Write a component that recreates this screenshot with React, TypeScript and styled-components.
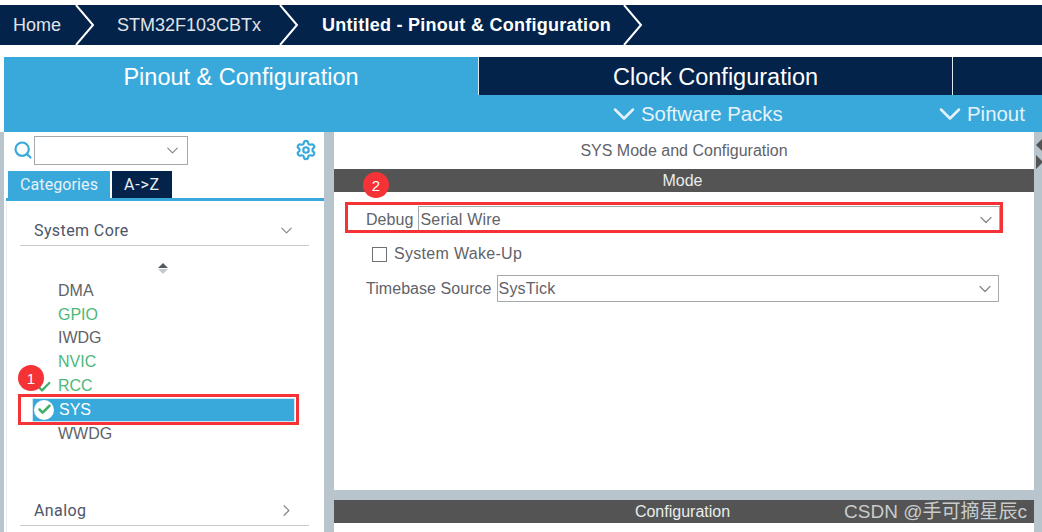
import React from "react";
import styled, { createGlobalStyle } from "styled-components";
import { ChevronDown, ChevronRight, Search, Settings, Check } from "lucide-react";

const navy = "#03234b";
const blue = "#39a9dc";
const greyBar = "#535453";
const gutter = "#b9c5cc";
const textGrey = "#5f6369";
const green = "#4cb878";
const red = "#f53236";

const GlobalStyle = createGlobalStyle`
  html, body {
    margin: 0;
    padding: 0;
    background: #fff;
    font-family: "Liberation Sans", Arial, sans-serif;
  }
`;

const peripherals = [
  { name: "DMA", active: false },
  { name: "GPIO", active: true },
  { name: "IWDG", active: false },
  { name: "NVIC", active: true },
];

const BreadcrumbArrow = () => (
  <ArrowSvg viewBox="0 0 20 40" aria-hidden="true">
    <path d="M1 0 L18 20 L1 40" fill="none" stroke="#fff" strokeWidth="2" />
  </ArrowSvg>
);

const App: React.FC = () => {
  return (
    <Page>
      <GlobalStyle />
      <Breadcrumb>
        <Crumb $pad="0 14px 0 13px">Home</Crumb>
        <BreadcrumbArrow />
        <Crumb $pad="0 18px 0 22px">STM32F103CBTx</Crumb>
        <BreadcrumbArrow />
        <Crumb $pad="0 12px 0 23px" $bold>Untitled - Pinout &amp; Configuration</Crumb>
        <BreadcrumbArrow />
      </Breadcrumb>

      <MainTabs>
        <MainTab $active $width={475}>Pinout &amp; Configuration</MainTab>
        <MainTab $width={474}>Clock Configuration</MainTab>
        <MainTab $width={89} />
      </MainTabs>
      <SubBar>
        <SubItem $width={178}>
          <ChevronDown size={36} strokeWidth={1.7} />
          Software Packs
        </SubItem>
        <SubItem $width={92}>
          <ChevronDown size={36} strokeWidth={1.7} />
          Pinout
        </SubItem>
      </SubBar>

      <Body>
        <Sidebar>
          <SearchRow>
            <Search size={20} color={blue} strokeWidth={2.6} />
            <SearchSelect>
              <ChevronDown size={19} color="#85898d" strokeWidth={1.5} />
            </SearchSelect>
            <GearSlot>
              <Settings size={22} color={blue} strokeWidth={2.4} />
            </GearSlot>
          </SearchRow>
          <SideTabs>
            <SideTab $active $width={102}>Categories</SideTab>
            <SideTab $width={60}>A-&gt;Z</SideTab>
          </SideTabs>
          <SideContent>
            <SectionHead $top={17}>
              System Core
              <ChevronDown size={19} color="#85898d" strokeWidth={1.5} />
            </SectionHead>
            <SortArrows>
              <SortUp />
              <SortDown />
            </SortArrows>
            <PeripheralList>
              {peripherals.map((p) => (
                <Peripheral key={p.name} $active={p.active}>{p.name}</Peripheral>
              ))}
              <Peripheral $active>
                <RccCheck size={16} color="#3fae68" strokeWidth={3.4} />
                RCC
                <Badge $left={-40} $top={-9}>1</Badge>
              </Peripheral>
              <SelectedRow>
                <CheckDisc>
                  <Check size={15} color="#3fae68" strokeWidth={4} />
                </CheckDisc>
                SYS
                <SidebarMark />
              </SelectedRow>
              <Peripheral>WWDG</Peripheral>
            </PeripheralList>
            <SectionHead $top={52}>
              Analog
              <ChevronRight size={19} color="#85898d" strokeWidth={1.5} />
            </SectionHead>
          </SideContent>
        </Sidebar>

        <Detail>
          <ModePanel>
            <PanelTitle>SYS Mode and Configuration</PanelTitle>
            <DarkBar>
              Mode
              <Badge $left={-9} $top={3}>2</Badge>
            </DarkBar>
            <FormRow $top={14} $left={32}>
              <FieldLabel>Debug</FieldLabel>
              <FieldSelect $width={582}>
                Serial Wire
                <ChevronDown size={20} color="#85898d" strokeWidth={1.5} />
              </FieldSelect>
              <DebugMark />
            </FormRow>
            <WakeRow>
              <CheckBox />
              System Wake-Up
            </WakeRow>
            <FormRow $top={12} $left={32}>
              <FieldLabel>Timebase Source</FieldLabel>
              <FieldSelect $width={502}>
                SysTick
                <ChevronDown size={20} color="#85898d" strokeWidth={1.5} />
              </FieldSelect>
            </FormRow>
          </ModePanel>
          <ConfigPanel>
            <ConfigBar>
              Configuration
              <Watermark>CSDN @手可摘星辰c</Watermark>
            </ConfigBar>
          </ConfigPanel>
        </Detail>

        <RightGutter>
          <GutterLeft />
          <GutterRight />
        </RightGutter>
      </Body>
    </Page>
  );
};

export default App;

const Page = styled.div`
  width: 1042px;
  height: 532px;
  overflow: hidden;
  display: flex;
  flex-direction: column;
  background: #fff;
`;

const Breadcrumb = styled.nav`
  margin-top: 5px;
  height: 40px;
  flex: none;
  display: flex;
  align-items: center;
  background: ${navy};
`;

const Crumb = styled.span<{ $pad: string; $bold?: boolean }>`
  padding: ${(p) => p.$pad};
  color: #fff;
  font-size: 18px;
  font-weight: ${(p) => (p.$bold ? 700 : 400)};
  letter-spacing: ${(p) => (p.$bold ? "0.27px" : "0")};
  white-space: nowrap;
  opacity: ${(p) => (p.$bold ? 1 : 0.88)};
`;

const ArrowSvg = styled.svg`
  width: 20px;
  height: 40px;
  flex: none;
`;

const MainTabs = styled.div`
  margin: 12px 0 0 4px;
  height: 38px;
  flex: none;
  display: flex;
  background: ${navy};
`;

const MainTab = styled.div<{ $active?: boolean; $width: number }>`
  width: ${(p) => p.$width}px;
  box-sizing: border-box;
  display: flex;
  align-items: center;
  justify-content: center;
  padding-top: 2px;
  color: #fff;
  font-size: 23.5px;
  background: ${(p) => (p.$active ? blue : navy)};
  border-right: 1px solid #dfe6ec;

  &:last-child {
    border-right: 0;
  }
`;

const SubBar = styled.div`
  margin-left: 4px;
  height: 37px;
  flex: none;
  box-sizing: border-box;
  display: flex;
  justify-content: flex-end;
  align-items: center;
  padding: 1px 18px 0 0;
  gap: 148px;
  background: ${blue};
`;

const SubItem = styled.div<{ $width: number }>`
  width: ${(p) => p.$width}px;
  display: flex;
  align-items: center;
  color: #e4f3fa;
  font-size: 20.4px;
  white-space: nowrap;

  svg {
    flex: none;
    margin-right: -1px;
  }
`;

const Body = styled.div`
  flex: 1;
  min-height: 0;
  display: flex;
  background: ${gutter};
`;

const Sidebar = styled.aside`
  width: 320px;
  margin-left: 4px;
  flex: none;
  display: flex;
  flex-direction: column;
  background: #fff;
`;

const SearchRow = styled.div`
  height: 34px;
  flex: none;
  display: flex;
  align-items: center;
  padding-left: 9px;
  padding-top: 2px;
  box-sizing: border-box;
`;

const SearchSelect = styled.div`
  width: 154px;
  height: 29px;
  margin-left: 1px;
  box-sizing: border-box;
  border: 1.5px solid #a3a9ad;
  display: flex;
  align-items: center;
  justify-content: flex-end;
  padding-right: 5px;
`;

const GearSlot = styled.div`
  display: flex;
  margin-left: auto;
  margin-right: 7px;
`;

const SideTabs = styled.div`
  margin: 5px 0 0 2px;
  height: 30px;
  flex: none;
  box-sizing: border-box;
  display: flex;
  gap: 2px;
  padding-left: 2px;
  border-bottom: 3px solid ${blue};
`;

const SideTab = styled.div<{ $active?: boolean; $width: number }>`
  width: ${(p) => p.$width}px;
  display: flex;
  align-items: center;
  justify-content: center;
  color: #e8f1f6;
  font-family: Roboto, "Liberation Sans", sans-serif;
  font-size: 16px;
  letter-spacing: ${(p) => (p.$active ? "0.1px" : "0.8px")};
  background: ${(p) => (p.$active ? blue : navy)};
`;

const SideContent = styled.div`
  flex: 1;
  margin-left: 2px;
  padding: 0 15px 0 13px;
  border-left: 1px solid #e9eef1;
  display: flex;
  flex-direction: column;
`;

const SectionHead = styled.div<{ $top: number }>`
  margin-top: ${(p) => p.$top}px;
  height: 28px;
  flex: none;
  box-sizing: border-box;
  display: flex;
  align-items: center;
  justify-content: space-between;
  padding: 0 13px 2px 14px;
  color: #4d5568;
  font-family: Roboto, "Liberation Sans", sans-serif;
  font-size: 16px;
  letter-spacing: 0.4px;
  border-bottom: 1.5px solid #c5ccd2;
`;

const SortArrows = styled.div`
  margin: 17px 0 0 138px;
  display: flex;
  flex-direction: column;
  gap: 1px;
  align-self: flex-start;
`;

const SortUp = styled.span`
  width: 0;
  height: 0;
  border: 5px solid transparent;
  border-top: 0;
  border-bottom: 5px solid #55595c;
`;

const SortDown = styled.span`
  width: 0;
  height: 0;
  border: 5px solid transparent;
  border-bottom: 0;
  border-top: 5px solid #c4c8ca;
`;

const PeripheralList = styled.div`
  margin-top: 5px;
  display: flex;
  flex-direction: column;
`;

const Peripheral = styled.div<{ $active?: boolean }>`
  position: relative;
  height: 23.8px;
  display: flex;
  align-items: center;
  padding-left: 38px;
  color: ${(p) => (p.$active ? green : textGrey)};
  font-size: 16px;
`;

const RccCheck = styled(Check)`
  position: absolute;
  left: 16px;
  top: 5px;
`;

const SelectedRow = styled.div`
  position: relative;
  margin-left: 12px;
  width: 263px;
  height: 24px;
  box-sizing: border-box;
  display: flex;
  align-items: center;
  gap: 5px;
  padding-left: 1px;
  color: #fff;
  font-size: 16px;
  background: ${blue};
  border: 1px solid #cfe9f5;
`;

const CheckDisc = styled.span`
  width: 20px;
  height: 20px;
  border-radius: 50%;
  background: #fff;
  display: flex;
  align-items: center;
  justify-content: center;
`;

const SidebarMark = styled.span`
  position: absolute;
  left: -15px;
  top: -5px;
  width: 281px;
  height: 31px;
  box-sizing: border-box;
  border: 3px solid ${red};
`;

const Badge = styled.span<{ $left: number; $top: number }>`
  position: absolute;
  left: ${(p) => p.$left + 38}px;
  top: ${(p) => p.$top}px;
  width: 26px;
  height: 26px;
  border-radius: 50%;
  background: ${red};
  color: #fff;
  font-size: 15px;
  font-family: "Liberation Sans", sans-serif;
  display: flex;
  align-items: center;
  justify-content: center;
`;

const Detail = styled.main`
  width: 700px;
  margin-left: 10px;
  flex: none;
  display: flex;
  flex-direction: column;
  background: ${gutter};
`;

const ModePanel = styled.section`
  height: 358px;
  flex: none;
  box-sizing: border-box;
  background: #fff;
  display: flex;
  flex-direction: column;
`;

const PanelTitle = styled.div`
  height: 37px;
  flex: none;
  display: flex;
  align-items: center;
  justify-content: center;
  color: ${textGrey};
  font-size: 16px;
`;

const DarkBar = styled.div`
  position: relative;
  height: 23px;
  flex: none;
  box-sizing: border-box;
  display: flex;
  align-items: center;
  justify-content: center;
  padding-right: 3px;
  background: ${greyBar};
  color: #e9ecee;
  font-size: 16px;
`;

const ConfigBar = styled(DarkBar)`
  padding-top: 1px;
`;

const FormRow = styled.div<{ $top: number; $left: number }>`
  position: relative;
  margin: ${(p) => p.$top}px 0 0 ${(p) => p.$left}px;
  display: flex;
  align-items: center;
  gap: 5px;
`;

const FieldLabel = styled.label`
  color: ${textGrey};
  font-size: 16px;
  letter-spacing: 0.05px;
  white-space: nowrap;
`;

const FieldSelect = styled.div<{ $width: number }>`
  width: ${(p) => p.$width}px;
  height: 27px;
  box-sizing: border-box;
  border: 1.5px solid #a3a9ad;
  display: flex;
  align-items: center;
  justify-content: space-between;
  padding: 0 3px 0 1px;
  color: ${textGrey};
  font-size: 16px;
  letter-spacing: 0.2px;
`;

const DebugMark = styled.span`
  position: absolute;
  left: -21px;
  top: -4px;
  width: 658px;
  height: 31px;
  box-sizing: border-box;
  border: 3px solid ${red};
`;

const WakeRow = styled.div`
  margin: 12px 0 0 38px;
  display: flex;
  align-items: center;
  gap: 7px;
  height: 18px;
  color: ${textGrey};
  font-size: 16px;
  letter-spacing: 0.3px;
`;

const CheckBox = styled.span`
  width: 15px;
  height: 15px;
  box-sizing: border-box;
  border: 1.5px solid #6e7276;
`;

const ConfigPanel = styled.section`
  margin-top: 10px;
  flex: 1;
  background: #fff;
`;

const Watermark = styled.span`
  position: absolute;
  right: 7px;
  top: 0;
  color: #c9cccc;
  font-family: "Liberation Sans", "Noto Sans CJK SC", sans-serif;
  font-size: 19px;
  line-height: 24px;
  white-space: nowrap;
`;

const RightGutter = styled.div`
  flex: 1;
  position: relative;
`;

const GutterLeft = styled.span`
  position: absolute;
  left: 2px;
  top: 6px;
  width: 0;
  height: 0;
  border: 7px solid transparent;
  border-left: 0;
  border-right: 7px solid ${greyBar};
`;

const GutterRight = styled.span`
  position: absolute;
  left: 2px;
  top: 23px;
  width: 0;
  height: 0;
  border: 7px solid transparent;
  border-right: 0;
  border-left: 7px solid ${greyBar};
`;
